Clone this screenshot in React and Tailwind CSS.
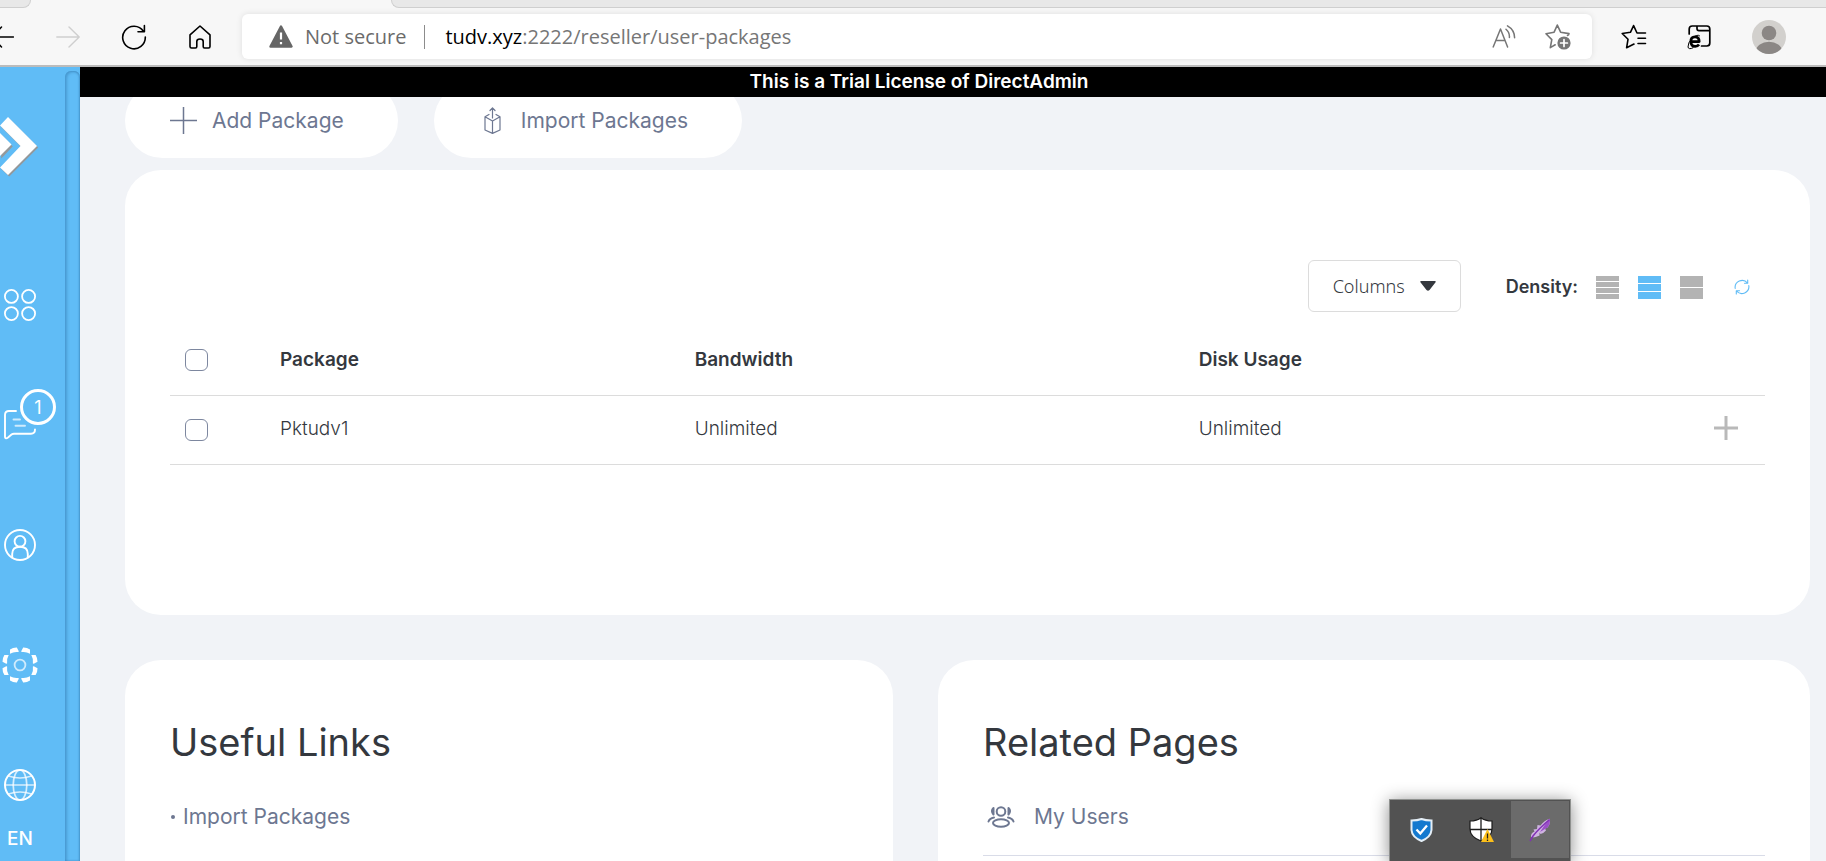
const stroke = { fill: "none", stroke: "currentColor", strokeLinecap: "round", strokeLinejoin: "round" };

function BrowserBar() {
  return (
    <header className="flex h-[67px] shrink-0 flex-col border-b-2 border-[#bcbcbc] bg-[#f7f7f7]">
      <div className="flex h-2 shrink-0 justify-between">
        <div className="w-[31px] rounded-br-lg border-r border-b border-[#cfcfcf] bg-[#e8e8e8]" />
        <div className="ml-[360px] flex-1 rounded-bl-lg border-b border-l border-[#cfcfcf] bg-[#e8e8e8]" />
      </div>
      <div className="flex flex-1 items-center text-black">
        <button aria-label="Back" className="h-6 w-3.5">
          <svg width="14" height="24" viewBox="0 0 14 24" {...stroke} strokeWidth="1.5">
            <path d="M-8 12H13.5M1.5 2L-8 12L1.5 22" />
          </svg>
        </button>
        <button aria-label="Forward" className="ml-[42px] text-[#cfcfcf]">
          <svg width="24" height="24" viewBox="0 0 24 24" {...stroke} strokeWidth="1.4">
            <path d="M.8 12H23.2M13 2L23.2 12L13 22" />
          </svg>
        </button>
        <button aria-label="Refresh" className="ml-[41px]">
          <svg width="26" height="26" viewBox="0 0 26 26" {...stroke} strokeWidth="1.6">
            <path d="M22.4 7.2A11.3 11.3 0 1 0 24.3 13M23.4 1.5V7.8H17" />
          </svg>
        </button>
        <button aria-label="Home" className="ml-[42px]">
          <svg width="22" height="24" viewBox="0 0 22 24" {...stroke} strokeWidth="1.6">
            <path d="M1 9.8L11 1L21 9.8V21.5Q21 23 19.5 23H15.5Q14.2 23 14.2 21.5V16.5Q14.2 14 11 14T7.8 16.5V21.5Q7.8 23 6.5 23H2.5Q1 23 1 21.5Z" />
          </svg>
        </button>
        <div className="ml-[31px] flex h-[45px] flex-1 items-center rounded-md bg-white pr-[21px] pl-[27px] font-['Open_Sans',sans-serif] text-[20px] shadow-[0_0_6px_rgba(0,0,0,0.10)]">
          <svg width="24" height="23" viewBox="0 0 24 23" className="text-[#666]">
            <path d="M12 1.5L22.5 21.5H1.5Z" fill="currentColor" stroke="currentColor" strokeWidth="2.4" strokeLinejoin="round" />
            <path d="M12 7.5V14.5M12 17V19.2" stroke="#fff" strokeWidth="2.2" />
          </svg>
          <span className="ml-3 whitespace-nowrap text-[#6b6b6b]">Not secure</span>
          <span className="mr-5 ml-[18px] h-6 w-px shrink-0 bg-[#8c8c8c]" />
          <span className="flex-1 whitespace-nowrap text-[#767676]">
            <span className="text-black">tudv.xyz</span>:2222/reseller/user-packages
          </span>
          <button aria-label="Read aloud" className="text-[#767676]">
            <svg width="24" height="24" viewBox="0 0 24 24" {...stroke} strokeWidth="1.5">
              <path d="M1.2 22L8.5 4L15.6 22M3.8 15.5H13M14 4.2Q17.8 7.5 17.4 12.5M15.5 .9Q22.6 5 22.6 12.8" />
            </svg>
          </button>
          <button aria-label="Add to favorites" className="ml-[29px] text-[#767676]">
            <svg width="26" height="26" viewBox="0 0 26 26" {...stroke} strokeWidth="1.6">
              <path d="M12.3 1.2L15.6 8.2L24 9.6Q24 11 22.5 11.4M12.3 1.2L9.1 8.2L1 9.8L6.8 15.6L5.3 23.6L10.2 20.8" />
              <circle cx="19" cy="19" r="6.6" fill="currentColor" stroke="none" />
              <path d="M19 15.6V22.4M15.6 19H22.4" stroke="#fff" strokeWidth="1.7" />
            </svg>
          </button>
        </div>
        <button aria-label="Favorites" className="ml-[29px]">
          <svg width="26" height="26" viewBox="0 0 26 26" {...stroke} strokeWidth="1.6">
            <path d="M24.5 9H16L12.6 1.6L9.4 8.3L1.2 9.5L7 15.3L5.6 23.8L13 20M17 14.2H24.5M17 19.5H24.5" />
          </svg>
        </button>
        <button aria-label="Internet Explorer mode" className="ml-10">
          <svg width="24" height="26" viewBox="0 0 24 26" {...stroke} strokeWidth="1.7">
            <path d="M2.2 10V5Q2.2 2 5.2 2H19.8Q22.8 2 22.8 5V19Q22.8 22 19.8 22H14.5M10 2V4.5Q10 6.6 12 6.6H22.8" />
            <path d="M3.8 17.6H12.2Q12.2 12.8 8 12.8T3.8 17.6Q4 22.4 8.2 22.4Q10.8 22.4 12 20.6" strokeWidth="2.7" strokeLinecap="butt" />
            <path d="M12.6 11.8Q10.5 9.8 5.5 14Q.5 19 1 23Q1.6 26 6 23.8" strokeWidth="1" />
          </svg>
        </button>
        <button aria-label="Profile" className="mr-10 ml-[41px]">
          <svg width="34" height="34" viewBox="0 0 34 34">
            <clipPath id="avatar"><circle cx="17" cy="17" r="17" /></clipPath>
            <g clipPath="url(#avatar)">
              <rect width="34" height="34" fill="#d2d0cd" />
              <circle cx="17" cy="13" r="7.3" fill="#8b8785" />
              <ellipse cx="17" cy="31" rx="13" ry="9.3" fill="#8b8785" />
            </g>
          </svg>
        </button>
      </div>
    </header>
  );
}

function Sidebar() {
  return (
    <aside className="flex w-20 shrink-0 justify-between bg-[#60bcf6] text-white">
      <nav aria-label="Main" className="flex w-10 flex-col items-center">
        <a href="#home" aria-label="DirectAdmin" className="block h-[178px] w-10 shrink-0 pt-[50px]">
          <svg width="40" height="60" viewBox="0 0 40 60">
            <g fill="#94989a" transform="translate(1.2 1.6)">
              <path d="M8 0L37 29L8 58L0 50.5L20.5 29L0 8.5Z" />
              <path d="M0 16L11.5 28L0 40Z" />
            </g>
            <path d="M8 0L37 29L8 58L0 50.5L20.5 29L0 8.5Z" fill="#fff" />
            <path d="M0 16L11.5 27.5L0 39Z" fill="#fff" />
          </svg>
        </a>
        <a href="#menu" aria-label="Dashboard" className="flex h-[120px] shrink-0 items-center">
          <svg width="32" height="32" viewBox="0 0 32 32" {...stroke} strokeWidth="1.8">
            <circle cx="7.4" cy="7.4" r="6.5" />
            <circle cx="24.6" cy="7.4" r="6.5" />
            <circle cx="7.4" cy="24.6" r="6.5" />
            <circle cx="24.6" cy="24.6" r="6.5" />
          </svg>
        </a>
        <a href="#messages" aria-label="Messages" className="relative flex h-[120px] shrink-0 items-center">
          <svg width="32" height="30" viewBox="0 0 32 30" {...stroke} strokeWidth="1.9">
            <path d="M12 1H5Q1 1 1 5V27Q1.5 29.5 4 27.5L7.5 24.5Q8.5 23.7 10 23.7H27Q31 23.7 31 19.5" />
            <path d="M9.5 9.5H16M11.5 15.7H21" strokeOpacity="0.7" />
          </svg>
          <span className="absolute top-6 left-4 flex size-9 items-center justify-center rounded-full border-[3px] border-white bg-[#60bcf6] font-['Inter',sans-serif] text-[18px]">
            1
          </span>
        </a>
        <a href="#account" aria-label="Account" className="flex h-[120px] shrink-0 items-center">
          <svg width="32" height="32" viewBox="0 0 32 32" {...stroke} strokeWidth="1.9">
            <circle cx="16" cy="16" r="15" />
            <circle cx="16" cy="12.3" r="5.4" />
            <path d="M8.2 28.5V25Q8.2 17.8 16 17.8T23.8 25V28.5" />
          </svg>
        </a>
        <a href="#settings" aria-label="Settings" className="flex h-[120px] shrink-0 items-center">
          <svg width="36" height="36" viewBox="-18 -18 36 36">
            {[0, 90, 180, 270].map((angle) => (
              <g key={angle} fill="#fff" transform={`rotate(${angle})`}>
                <path d="M1.2 -13.8L3.2 -17.5Q7 -17.6 10 -15.6V-11.3Q6 -13.6 1.600 -12.900Z" />
                <path d="M13.800 -1.200L17.500 -3.200Q17.600 -7 15.600 -10H11.300Q13.600 -6 12.900 -1.600Z" />
              </g>
            ))}
            <circle r="5.4" fill="none" stroke="#fff" strokeOpacity="0.7" strokeWidth="1.8" />
          </svg>
        </a>
        <button className="flex shrink-0 flex-col items-center gap-6 pt-11">
          <svg width="32" height="32" viewBox="0 0 32 32" {...stroke} strokeWidth="1.7">
            <circle cx="16" cy="16" r="15" strokeWidth="2" />
            <g strokeOpacity="0.75">
              <ellipse cx="16" cy="16" rx="6.8" ry="15" />
              <path d="M1 16H31M4.5 7Q16 11 27.5 7M4.5 25Q16 21 27.5 25" />
            </g>
          </svg>
          <span className="font-['Inter',sans-serif] text-[19px] leading-7 font-medium">EN</span>
        </button>
      </nav>
      <div className="mt-1 w-[15px] rounded-t-md shadow-[inset_2px_1px_3px_rgba(30,90,140,0.35),inset_-1px_0_2px_rgba(30,90,140,0.4)]" />
    </aside>
  );
}

function DensityButton({ label, heights, active }) {
  return (
    <button aria-label={label} aria-pressed={active} className={`flex h-[23px] w-[23px] flex-col justify-between ${active ? "text-[#60bcf6]" : "text-[#b3b3b3]"}`}>
      {heights.map((h, i) => (
        <span key={i} className="w-full bg-current" style={{ height: h }} />
      ))}
    </button>
  );
}

const boxClass = "block h-[22px] w-[23px] appearance-none rounded-md border border-[#7d879f] bg-white checked:bg-[#60bcf6]";

function PackageTable() {
  return (
    <section className="min-h-[445px] rounded-[36px] bg-white px-[45px] pt-[90px]">
      <div className="flex items-center justify-end">
        <button className="flex h-[52px] items-center gap-[15px] rounded-md border border-[#dcdcdc] px-6 font-['Noto_Sans',sans-serif] text-[18px] font-light text-[#34383e]">
          Columns
          <svg width="16" height="10" viewBox="0 0 16 10">
            <path d="M1 0H15Q16.500 .5 15 2L9.500 9Q8 10.500 6.500 9L1 2Q-.5 .5 1 0Z" fill="#34383e" />
          </svg>
        </button>
        <span className="mr-[18px] ml-[45px] font-['Inter',sans-serif] text-[18px] font-semibold text-[#34383e]">Density:</span>
        <div className="flex items-center gap-[19px] pt-0.5">
          <DensityButton label="Compact" heights={[5, 5, 5, 5]} />
          <DensityButton label="Comfortable" heights={[7, 7, 7]} active />
          <DensityButton label="Spacious" heights={[11, 11]} />
        </div>
        <button aria-label="Reload" className="mr-[15px] ml-[31px] pt-0.5 text-[#60bcf6]">
          <svg width="16" height="16" viewBox="0 0 16 16" {...stroke} strokeWidth="1.1">
            <path d="M1.200 9.500A7 7 0 0 1 13.500 4M13.700 1V4.200H10.500M14.800 6.500A7 7 0 0 1 2.500 12M2.300 15V11.800H5.500" />
          </svg>
        </button>
      </div>
      <table className="mt-[14px] w-full table-fixed text-left font-['Inter',sans-serif] text-[19px] text-[#34383e]">
        <thead>
          <tr className="h-[69px] border-b border-[#dcdcdc]">
            <th className="w-[110px] pl-[15px]"><input type="checkbox" aria-label="Select all packages" className={boxClass} /></th>
            <th className="w-[26%] font-semibold">Package</th>
            <th className="w-[31.6%] font-semibold">Bandwidth</th>
            <th className="font-semibold">Disk Usage</th>
            <th className="w-[10%]" aria-label="Details" />
          </tr>
        </thead>
        <tbody>
          <tr className="h-[69px] border-b border-[#dcdcdc] font-light">
            <td className="pl-[15px]"><input type="checkbox" aria-label="Select Pktudv1" className={boxClass} /></td>
            <td>Pktudv1</td>
            <td>Unlimited</td>
            <td>Unlimited</td>
            <td>
              <button aria-label="Expand row" className="mr-[27px] ml-auto block pb-1 text-[#b9b9b9]">
                <svg width="24" height="24" viewBox="0 0 24 24" stroke="currentColor" strokeWidth="3">
                  <path d="M12 0V24M0 12H24" />
                </svg>
              </button>
            </td>
          </tr>
        </tbody>
      </table>
    </section>
  );
}

function TrayPopup() {
  return (
    <div className="absolute right-[255px] bottom-0 flex h-[62px] border border-b-0 border-[#8f918f] bg-[#525252] p-px shadow-[0_2px_16px_rgba(0,0,0,0.45)]">
      <button aria-label="Security" className="mb-0.5 flex w-[60px] items-center justify-center">
        <svg width="23" height="24" viewBox="0 0 23 24">
          <path d="M11.500 1Q15.500 2.500 21.500 2.500V12Q21 19 11.500 23Q2 19 1.500 12V2.500Q7.500 2.500 11.500 1Z" fill="#1479cf" stroke="#e4eef6" strokeWidth="2" />
          <path d="M6.500 11.500L10.300 15.500L17 7.500" fill="none" stroke="#fff" strokeWidth="2.300" />
        </svg>
      </button>
      <button aria-label="Windows Security" className="mb-0.5 flex w-[60px] items-center justify-center">
        <svg width="25" height="25" viewBox="0 0 25 25">
          <path d="M12 .7Q16 4 23 4V12Q23 20 12 24Q1 20 1 12V4Q8 4 12 .7Z" fill="#fff" stroke="#1c1c1c" strokeWidth="1.200" />
          <path d="M12 1V24M1 12.500H23" stroke="#1c1c1c" strokeWidth="1.300" />
          <path d="M18.500 12L25 25H12Z" fill="#fcbf1a" />
          <path d="M18.500 16.500V21.500M18.500 22.500V24" stroke="#222" strokeWidth="1.300" />
        </svg>
      </button>
      <button aria-label="Lightshot" className="mb-0.5 flex w-[58px] items-center justify-center bg-[#6b6b6b]">
        <svg width="22" height="24" viewBox="0 0 22 24">
          <path d="M2 19Q1.500 15 5.500 13.500L4.500 11.500L8 11L8.500 7L11.500 7.500Q15 2.500 21 .8Q21.500 6 18.500 9.500L16 10.500L17 12.500Q14.500 15.500 11.500 16L10.500 14.500L10.500 17.500Q6.500 19.500 3.500 19.500Z" fill="#cfb3e2" />
          <path d="M21 .8Q21.500 6 18.500 9.500L11 14L16 6.500Z" fill="#9a4fc8" />
          <path d="M1 23L4 18Q10 10.500 20.500 1.500" fill="none" stroke="#8130b4" strokeWidth="1.500" />
        </svg>
      </button>
    </div>
  );
}

const actionClass =
  "flex h-[75px] items-center rounded-full bg-white pr-[54px] pl-[45px] font-['Inter',sans-serif] text-[21px] whitespace-nowrap text-[#6d7791]";

export default function App() {
  return (
    <div className="relative flex h-screen flex-col overflow-hidden bg-[#f1f3f7]">
      <BrowserBar />
      <div className="flex min-h-0 flex-1">
        <Sidebar />
        <div className="flex min-w-0 flex-1 flex-col">
          <p className="h-[30px] shrink-0 bg-black pr-[68px] text-center font-['Inter',sans-serif] text-[19px] leading-[30px] font-semibold text-white">
            This is a Trial License of DirectAdmin
          </p>
          <main className="min-h-0 flex-1 overflow-hidden pr-4 pl-[45px]">
            <div className="-mt-3.5 mb-3 flex gap-9">
              <button className={actionClass}>
                <svg width="27" height="27" viewBox="0 0 27 27" stroke="currentColor" strokeWidth="1.500" className="mr-[15px]">
                  <path d="M13.500 0V27M0 13.500H27" />
                </svg>
                Add Package
              </button>
              <button className={actionClass}>
                <svg width="27" height="27" viewBox="0 0 27 27" {...stroke} strokeWidth="1.200" className="mr-[15px]">
                  <path d="M10 7.500L6 9.800V23L13.500 26.400L21 23V9.800L17 7.500M6 9.800L13.500 14L21 9.800M13.500 14V26.400M13.500 11V.8M11 3.500L13.500 .8L16 3.500" />
                </svg>
                Import Packages
              </button>
            </div>
            <PackageTable />
            <div className="mt-[45px] flex gap-[45px] font-['Inter',sans-serif]">
              <section className="h-[400px] w-[768px] shrink-0 rounded-[36px] bg-white px-[45px] pt-[60px]">
                <h2 className="text-[38px] leading-[44px] text-[#34383e]">Useful Links</h2>
                <ul className="mt-[38px] text-[21px] leading-[30px] text-[#6d7791]">
                  <li className="flex items-center">
                    <span className="mr-2 ml-px size-1 rounded-full bg-current" />
                    <a href="#import">Import Packages</a>
                  </li>
                </ul>
              </section>
              <section className="h-[400px] flex-1 rounded-[36px] bg-white px-[45px] pt-[60px]">
                <h2 className="text-[38px] leading-[44px] text-[#34383e]">Related Pages</h2>
                <a href="#users" className="mt-[38px] flex items-center border-b border-[#d9dce8] pb-[23px] pl-1 text-[21px] leading-[30px] text-[#6d7791]">
                  <svg width="28" height="22" viewBox="0 0 28 22" {...stroke} strokeWidth="2" className="mr-[19px]">
                    <circle cx="14" cy="5.500" r="4.300" />
                    <ellipse cx="14" cy="17" rx="8" ry="3.700" />
                    <path d="M6.500 2Q3.500 5 6.500 8.500V2M21.500 2Q24.500 5 21.500 8.500V2M1.500 15.500Q2.500 12.500 7 11.500M26.500 15.500Q25.500 12.500 21 11.500" />
                  </svg>
                  My Users
                </a>
              </section>
            </div>
          </main>
        </div>
      </div>
      <TrayPopup />
    </div>
  );
}
